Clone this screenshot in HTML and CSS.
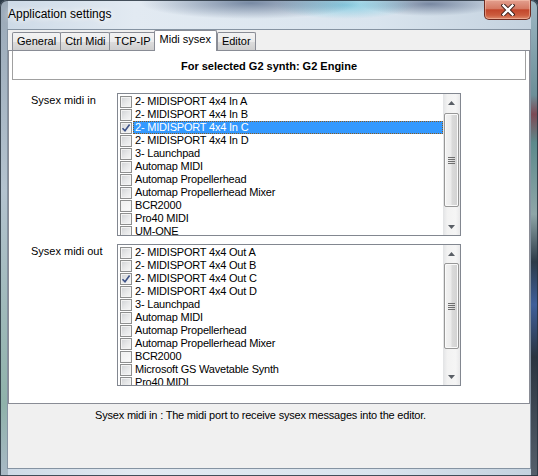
FILE: index.html
```html
<!DOCTYPE html>
<html>
<head>
<meta charset="utf-8">
<link rel="stylesheet" href="styles.css">
</head>
<body>
<div class="window">
  <div class="titlebar">
    <span class="title">Application settings</span>
    <div class="close">
      <svg width="14" height="12" viewBox="0 0 14 12">
        <path d="M2.5 1.5 L11.5 10.5 M11.5 1.5 L2.5 10.5" stroke="#3b1f1a" stroke-width="4.2" stroke-linecap="square"/>
        <path d="M2.5 1.5 L11.5 10.5 M11.5 1.5 L2.5 10.5" stroke="#ffffff" stroke-width="2.4" stroke-linecap="square"/>
      </svg>
    </div>
  </div>
  <div class="client">
    <div class="tabs">
      <div class="tab">General</div>
      <div class="tab">Ctrl Midi</div>
      <div class="tab">TCP-IP</div>
      <div class="tab active">Midi sysex</div>
      <div class="tab">Editor</div>
    </div>
    <div class="panel">
      <div class="header">For selected G2 synth: G2 Engine</div>
      <div class="row">
        <div class="label">Sysex midi in</div>
        <div class="listbox">
          <div class="items">
            <div class="item"><span class="cb"></span><span class="txt">2- MIDISPORT 4x4 In A</span></div>
            <div class="item"><span class="cb"></span><span class="txt">2- MIDISPORT 4x4 In B</span></div>
            <div class="item"><span class="cb checked"><svg width="10" height="10" viewBox="0 0 10 10"><path d="M1.5 5.2 L4 7.8 L8.6 1.6" fill="none" stroke="#3d5288" stroke-width="1.6"/></svg></span><span class="txt selected">2- MIDISPORT 4x4 In C</span></div>
            <div class="item"><span class="cb"></span><span class="txt">2- MIDISPORT 4x4 In D</span></div>
            <div class="item"><span class="cb"></span><span class="txt">3- Launchpad</span></div>
            <div class="item"><span class="cb"></span><span class="txt">Automap MIDI</span></div>
            <div class="item"><span class="cb"></span><span class="txt">Automap Propellerhead</span></div>
            <div class="item"><span class="cb"></span><span class="txt">Automap Propellerhead Mixer</span></div>
            <div class="item"><span class="cb light"></span><span class="txt">BCR2000</span></div>
            <div class="item"><span class="cb"></span><span class="txt">Pro40 MIDI</span></div>
            <div class="item"><span class="cb"></span><span class="txt">UM-ONE</span></div>
          </div>
          <div class="scroll">
            <div class="arrow"><svg width="7" height="4" viewBox="0 0 7 4"><path d="M0 4 L3.5 0 L7 4 Z" fill="#5a5f66"/></svg></div>
            <div class="thumb thumb1"><span class="grip"></span></div>
            <div class="track"></div>
            <div class="arrow"><svg width="7" height="4" viewBox="0 0 7 4"><path d="M0 0 L3.5 4 L7 0 Z" fill="#5a5f66"/></svg></div>
          </div>
        </div>
      </div>
      <div class="row row2">
        <div class="label">Sysex midi out</div>
        <div class="listbox listbox2">
          <div class="items">
            <div class="item"><span class="cb"></span><span class="txt">2- MIDISPORT 4x4 Out A</span></div>
            <div class="item"><span class="cb"></span><span class="txt">2- MIDISPORT 4x4 Out B</span></div>
            <div class="item"><span class="cb checked"><svg width="10" height="10" viewBox="0 0 10 10"><path d="M1.5 5.2 L4 7.8 L8.6 1.6" fill="none" stroke="#3d5288" stroke-width="1.6"/></svg></span><span class="txt">2- MIDISPORT 4x4 Out C</span></div>
            <div class="item"><span class="cb"></span><span class="txt">2- MIDISPORT 4x4 Out D</span></div>
            <div class="item"><span class="cb"></span><span class="txt">3- Launchpad</span></div>
            <div class="item"><span class="cb"></span><span class="txt">Automap MIDI</span></div>
            <div class="item"><span class="cb"></span><span class="txt">Automap Propellerhead</span></div>
            <div class="item"><span class="cb"></span><span class="txt">Automap Propellerhead Mixer</span></div>
            <div class="item"><span class="cb light"></span><span class="txt">BCR2000</span></div>
            <div class="item"><span class="cb"></span><span class="txt">Microsoft GS Wavetable Synth</span></div>
            <div class="item"><span class="cb"></span><span class="txt">Pro40 MIDI</span></div>
          </div>
          <div class="scroll">
            <div class="arrow"><svg width="7" height="4" viewBox="0 0 7 4"><path d="M0 4 L3.5 0 L7 4 Z" fill="#5a5f66"/></svg></div>
            <div class="thumb thumb2"><span class="grip"></span></div>
            <div class="track"></div>
            <div class="arrow"><svg width="7" height="4" viewBox="0 0 7 4"><path d="M0 0 L3.5 4 L7 0 Z" fill="#5a5f66"/></svg></div>
          </div>
        </div>
      </div>
    </div>
    <div class="status">Sysex midi in : The midi port to receive sysex messages into the editor.</div>
  </div>
</div>
</body>
</html>
```
FILE: styles.css
```css
html, body {
  margin: 0;
  padding: 0;
  background: #2b3a48;
}

.window {
  width: 538px;
  height: 476px;
  box-sizing: border-box;
  display: flex;
  flex-direction: column;
  border-radius: 7px 7px 0 0;
  overflow: hidden;
  font-family: "Liberation Sans", Arial, sans-serif;
  font-size: 11px;
  color: #000;
  box-shadow: inset 0 0 0 1px rgba(40, 52, 64, 0.85);
  background:
    linear-gradient(to bottom, #9fb8c4 0%, #6c8f98 20%, #7c4a55 24%, #5d8a8c 30%, #8fa6a8 45%, #2c3a48 55%, #3e5f9a 64%, #2a3440 75%, #56606c 100%) right top / 7px 100% no-repeat,
    linear-gradient(to bottom, #9aa9b8 0%, #b4c3cf 40%, #8fb2aa 85%, #a9b9c6 100%) left top / 8px 100% no-repeat,
    radial-gradient(ellipse 110px 16px at 250px 3px, rgba(35, 60, 100, 0.55), rgba(35, 60, 100, 0)),
    radial-gradient(ellipse 70px 14px at 345px 5px, rgba(60, 185, 215, 0.5), rgba(60, 185, 215, 0)),
    radial-gradient(ellipse 70px 12px at 430px 4px, rgba(30, 50, 90, 0.5), rgba(30, 50, 90, 0)),
    linear-gradient(to right, #ccd9e6, #e2eaf2 25%, #d9e4ee 70%, #c3d1de);
}

.titlebar {
  height: 30px;
  flex: none;
  display: flex;
  justify-content: space-between;
  align-items: flex-start;
  padding: 0 7px 0 8px;
}

.title {
  margin-top: 7px;
  font-size: 12px;
  line-height: 15px;
  color: #000;
  text-shadow: 0 0 6px #fff, 0 0 10px #fff;
}

.close {
  width: 47px;
  height: 20px;
  box-sizing: border-box;
  border: 1px solid #6e2c22;
  border-top: none;
  border-radius: 0 0 5px 5px;
  background: linear-gradient(to bottom, #e3a08f 0%, #d57a64 45%, #c2462b 52%, #cc5c3e 80%, #dd8a6c 100%);
  box-shadow: inset 0 0 0 1px rgba(255, 210, 190, 0.45);
  display: flex;
  align-items: center;
  justify-content: center;
}

.client {
  flex: 1;
  margin: 0 8px 8px 8px;
  background: #f0f0f0;
  display: flex;
  flex-direction: column;
  box-shadow: 0 0 0 1px #8593a2;
}

.tabs {
  height: 20px;
  flex: none;
  display: flex;
  align-items: flex-end;
  padding-left: 4px;
}

.tab {
  height: 18px;
  box-sizing: border-box;
  padding: 0 4px;
  border: 1px solid #898c95;
  border-bottom: none;
  border-radius: 2px 2px 0 0;
  background: linear-gradient(to bottom, #f3f3f3 0%, #ebebeb 50%, #dddddd 51%, #cfcfcf 100%);
  line-height: 17px;
  font-size: 11px;
  text-align: center;
  margin-right: -1px;
}

.tab.active {
  height: 21px;
  margin-bottom: -1px;
  margin-left: -1px;
  padding: 0 5px;
  background: #fff;
  position: relative;
  z-index: 1;
  line-height: 16px;
  margin-right: 0;
}

.panel {
  height: 354px;
  flex: none;
  box-sizing: border-box;
  border: 1px solid #898c95;
  background: #fff;
  padding: 0 3px;
}

.header {
  height: 29px;
  box-sizing: border-box;
  border: 1px solid #a0a0a0;
  border-top: none;
  padding-top: 9px;
  line-height: 13px;
  text-align: center;
  font-weight: bold;
}

.row {
  display: flex;
  margin-top: 13px;
}

.row2 {
  margin-top: 8px;
}

.label {
  width: 105px;
  box-sizing: border-box;
  padding: 1px 0 0 19px;
  line-height: 13px;
}

.listbox {
  width: 344px;
  height: 143px;
  box-sizing: border-box;
  border: 1px solid #828790;
  display: flex;
  background: #fff;
}

.listbox2 {
  height: 142px;
}

.items {
  flex: 1;
  min-width: 0;
  padding: 1px 0 0 2px;
  overflow: hidden;
}

.item {
  height: 13px;
  display: flex;
  align-items: center;
  white-space: nowrap;
  letter-spacing: -0.2px;
}

.cb {
  width: 12px;
  height: 12px;
  flex: none;
  box-sizing: border-box;
  border: 1px solid #8e8f8f;
  background: linear-gradient(135deg, #cfd1d4 0%, #e6e7e8 50%, #f7f7f7 100%);
  box-shadow: inset 0 0 0 1px #f3f3f3;
  margin-right: 1px;
  display: flex;
  align-items: center;
  justify-content: center;
}

.cb.light {
  background: linear-gradient(135deg, #eeeeee, #fbfbfb);
}

.txt {
  height: 13px;
  box-sizing: border-box;
  padding: 0 2px;
  line-height: 13px;
}

.txt.selected {
  flex: 1;
  background: #3399ff;
  color: #fff;
  border: 1px dotted #8a5a20;
  padding-left: 1px;
  line-height: 11px;
}

.scroll {
  width: 17px;
  flex: none;
  display: flex;
  flex-direction: column;
  background: linear-gradient(to right, #e2e3e5 0%, #f2f2f2 25%, #f5f5f5 75%, #e9e9ea 100%);
}

.arrow {
  height: 17px;
  flex: none;
  display: flex;
  align-items: center;
  justify-content: center;
}

.thumb {
  flex: none;
  margin: 2px 1px 0 1px;
  box-sizing: border-box;
  border: 1px solid #979797;
  border-radius: 2px;
  background: linear-gradient(to right, #f3f3f3 0%, #ebebeb 45%, #dadada 55%, #d2d2d2 100%);
  box-shadow: inset 0 0 0 1px #fafafa;
  display: flex;
  align-items: center;
  justify-content: center;
}

.thumb1 {
  height: 94px;
}

.thumb2 {
  height: 86px;
  margin-top: 1px;
}

.grip {
  width: 7px;
  height: 7px;
  background: repeating-linear-gradient(to bottom, #6f6f6f 0, #6f6f6f 1px, transparent 1px, transparent 2px);
}

.track {
  flex: 1;
}

.status {
  flex: 1;
  text-align: center;
  padding: 5px 17px 0 0;
  line-height: 13px;
  font-size: 11px;
  letter-spacing: -0.2px;
}
```
